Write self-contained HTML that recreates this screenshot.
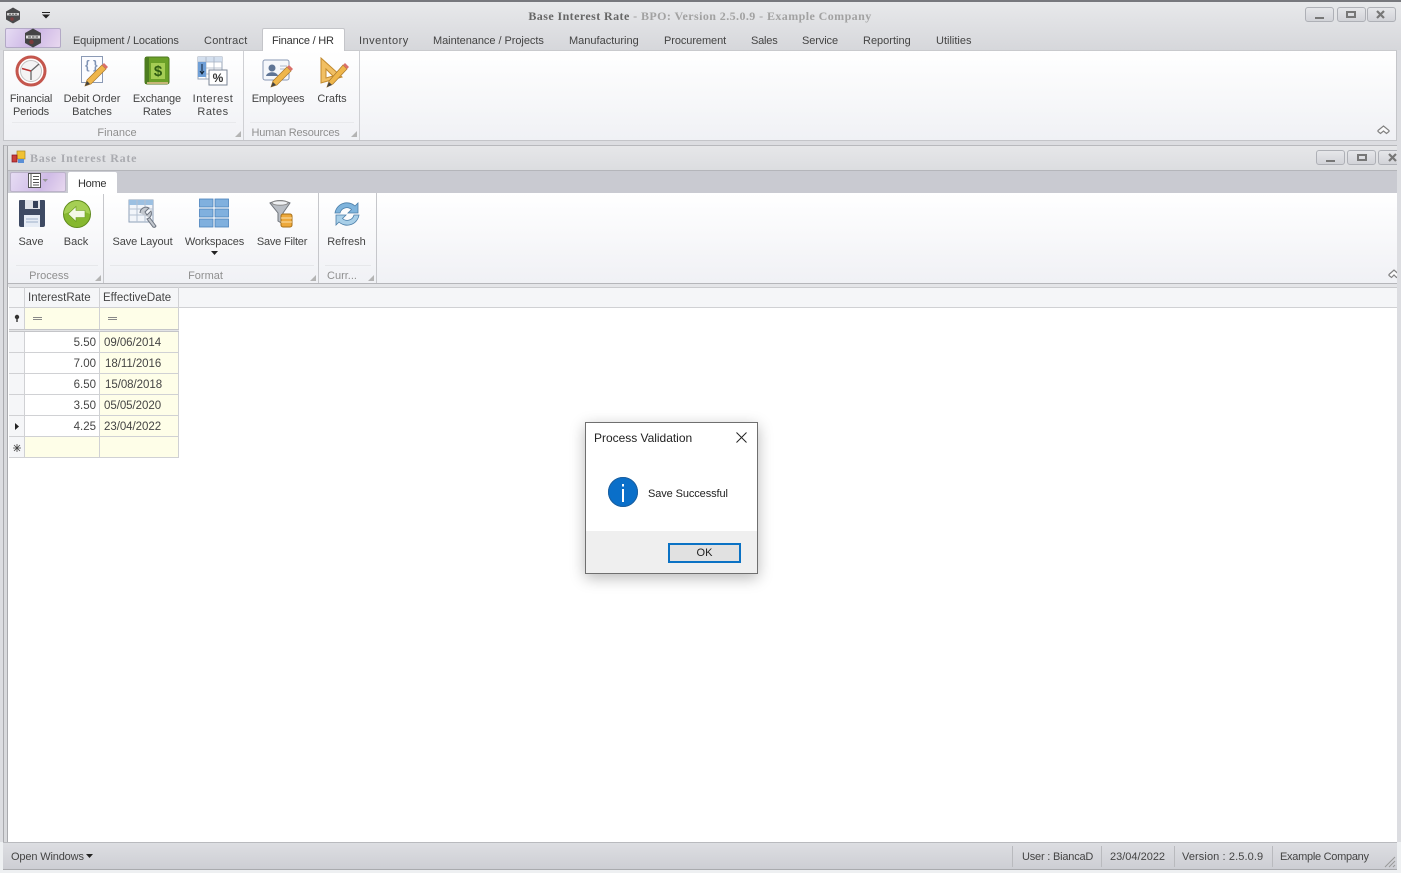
<!DOCTYPE html>
<html><head><meta charset="utf-8"><title>Base Interest Rate</title>
<style>
html,body{margin:0;padding:0}
body{width:1401px;height:873px;overflow:hidden;position:relative;background:#dcdde1;font-family:"Liberation Sans",sans-serif;font-size:11px;color:#333}
.a{position:absolute}
.t{position:absolute;white-space:nowrap;line-height:13px;color:#444;margin-top:1px}
.c{transform:translateX(-50%);text-align:center}
.g{color:#8f8f8f}
.wb{position:absolute;height:13px;border:1px solid #aeb0b6;border-radius:3px;background:linear-gradient(#e6e7ea,#d2d3d8);box-sizing:content-box}
.corner{position:absolute;width:0;height:0;border-left:6px solid transparent;border-bottom:6px solid #b4b4b4}
svg{position:absolute;overflow:visible}
.cell{position:absolute;box-sizing:border-box;border-right:1px solid #d0d1d4;border-bottom:1px solid #d0d1d4;line-height:22px;color:#444;font-size:11.5px;height:21px}
</style></head><body>

<!-- top chrome -->
<div class="a" style="left:0;top:0;width:1401px;height:2px;background:#77787d"></div>
<div class="a" style="left:0;top:2px;width:1401px;height:48px;background:linear-gradient(#e8e9eb,#d6d7db)"></div>
<svg style="left:5px;top:7px" width="16" height="17" viewBox="0 0 16 17"><path d="M8 0.5L15 4.500V12.500L8 16.500L1 12.500V4.500Z" fill="#4a4a4c"/><rect x="2" y="6" width="12" height="2.500" fill="#cfcfcf"/><path d="M4 7.200H6M7 7.200H9M10 7.200H12" stroke="#444" stroke-width=".8"/><circle cx="7" cy="12" r="1.800" fill="#7c3f3f"/></svg>
<svg style="left:42px;top:12px" width="8" height="7"><rect x="0" y="0" width="8" height="1" fill="#222"/><path d="M0 2.500H8L4 6.500Z" fill="#222"/></svg>
<div class="t c" style="left:700px;top:9px;font-family:'Liberation Serif',serif;font-size:12px;font-weight:bold;color:#a2a2a2;letter-spacing:.42px"><span style="color:#666">Base Interest Rate</span> - BPO: Version 2.5.0.9 - Example Company</div>

<div class="wb" style="left:1305px;top:7px;width:27px"></div>
<div class="a" style="left:1315px;top:17px;width:9px;height:2px;background:#777"></div>
<div class="wb" style="left:1337px;top:7px;width:27px"></div>
<div class="a" style="left:1346px;top:11px;width:6px;height:3px;border:2px solid #777"></div>
<div class="wb" style="left:1367px;top:7px;width:27px"></div>
<svg style="left:1376px;top:10px" width="10" height="9"><path d="M1 1L8 8M8 1L1 8" stroke="#777" stroke-width="2.200"/></svg>

<!-- app button -->
<div class="a" style="left:5px;top:28px;width:54px;height:18px;border:1px solid #b3a9c6;border-radius:2px;background:linear-gradient(120deg,#e6dcf3,#cdb7e6 50%,#e8d8ef)"></div>
<svg style="left:24px;top:28px" width="18" height="20" viewBox="0 0 18 20"><path d="M9 0.500L17 5V15L9 19.500L1 15V5Z" fill="#444446"/><rect x="2" y="7.500" width="14" height="3" fill="#dedede"/><path d="M4 9H7M8 9H10.500M11.500 9H14" stroke="#444" stroke-width=".9"/><circle cx="7.500" cy="14" r="2.200" fill="#7c3a3a"/></svg>

<!-- main tabs -->
<div class="t" style="left:73px;top:34px;letter-spacing:-.15px">Equipment / Locations</div>
<div class="t" style="left:204px;top:34px;letter-spacing:.25px">Contract</div>
<div class="a" style="left:262px;top:28px;width:83px;height:23px;background:#fff;border:1px solid #c4c5c9;border-bottom:none;box-sizing:border-box;border-radius:2px 2px 0 0;z-index:3"></div>
<div class="t" style="left:272px;top:34px;z-index:4;color:#333;letter-spacing:-.2px">Finance / HR</div>
<div class="t" style="left:359px;top:34px;letter-spacing:.5px">Inventory</div>
<div class="t" style="left:433px;top:34px;letter-spacing:-.05px">Maintenance / Projects</div>
<div class="t" style="left:569px;top:34px">Manufacturing</div>
<div class="t" style="left:664px;top:34px;letter-spacing:-.08px">Procurement</div>
<div class="t" style="left:751px;top:34px;letter-spacing:-.2px">Sales</div>
<div class="t" style="left:802px;top:34px;letter-spacing:-.1px">Service</div>
<div class="t" style="left:863px;top:34px">Reporting</div>
<div class="t" style="left:936px;top:34px">Utilities</div>

<!-- main ribbon -->
<div class="a" style="left:3px;top:50px;width:1394px;height:91px;box-sizing:border-box;background:linear-gradient(#fff,#f0f1f5);border:1px solid #c4c5c9;border-top:1px solid #c9cacd"></div>
<div class="a" style="left:243px;top:51px;width:1px;height:89px;background:#cfd0d4"></div>
<div class="a" style="left:359px;top:51px;width:1px;height:89px;background:#cfd0d4"></div>
<div class="a" style="left:12px;top:122px;width:224px;height:1px;background:#e8e9ec"></div>
<div class="a" style="left:250px;top:122px;width:104px;height:1px;background:#e8e9ec"></div>
<div class="corner" style="left:235px;top:131px"></div>
<div class="corner" style="left:351px;top:131px"></div>

<!-- clock -->
<svg style="left:15px;top:55px" width="32" height="32" viewBox="0 0 32 32"><circle cx="16" cy="16" r="14" fill="#fff" stroke="#c4564d" stroke-width="3"/><circle cx="16" cy="16" r="10.500" fill="#f4f4f4" stroke="#c2c2c2"/><path d="M16 16L16 25M16 16L24 9" stroke="#666" stroke-width="1.300" fill="none"/><path d="M16 16L7 13.500" stroke="#b33" stroke-width="1.500"/></svg>
<!-- debit order -->
<svg style="left:79px;top:55px" width="30" height="32" viewBox="0 0 30 32"><rect x="2.500" y="1.500" width="21" height="26" fill="#fbfcff" stroke="#8b9ab5"/><text x="6" y="14" font-family="Liberation Sans" font-size="12" font-weight="bold" fill="#7f93b5">{ }</text><path d="M6 31L8 25L23 10L27 14L12 29Z" fill="#efb64b" stroke="#a9772a" stroke-width=".7"/><path d="M23 10L25 8L29 12L27 14Z" fill="#d9706a"/><path d="M6 31L8 26L11 29Z" fill="#444"/></svg>
<!-- exchange -->
<svg style="left:144px;top:56px" width="26" height="30" viewBox="0 0 26 30"><rect x="1" y="1" width="24" height="27" rx="2" fill="#6ba028" stroke="#4d7820"/><rect x="1" y="1" width="4" height="27" fill="#4d7d1f"/><rect x="7" y="7" width="14" height="16" fill="#a5cd54"/><text x="14" y="20" text-anchor="middle" font-size="15" font-weight="bold" fill="#2f5c12">$</text><rect x="3" y="26" width="21" height="2" fill="#c7b678"/></svg>
<!-- interest -->
<svg style="left:197px;top:56px" width="32" height="31" viewBox="0 0 32 31"><rect x="1" y="1" width="24" height="22" fill="#fff" stroke="#9aa6b8"/><rect x="1" y="1" width="24" height="5" fill="#d3dfee"/><path d="M9 1V23M17 1V23M1 6H25M1 12H25M1 18H25" stroke="#a6b1c2" stroke-width=".8"/><rect x="1" y="6" width="8" height="15" fill="#6f9fd7"/><path d="M5 8V17M3 15L5 18L7 15" stroke="#123" stroke-width="1" fill="none"/><rect x="12" y="14" width="18" height="15" fill="#fff" stroke="#7b8697"/><text x="21" y="26" text-anchor="middle" font-size="12" font-weight="bold" fill="#333">%</text></svg>
<!-- employees -->
<svg style="left:262px;top:57px" width="32" height="31" viewBox="0 0 32 31"><rect x="1" y="3" width="26" height="20" rx="2" fill="#f5f7fb" stroke="#8998b4"/><circle cx="10" cy="11" r="3.500" fill="#5f7596"/><path d="M4 19C5 14 15 14 16 19Z" fill="#5f7596"/><path d="M18 9H25M18 12H24" stroke="#aeb8c8"/><path d="M9 30L11 24L25 10L29 14L15 28Z" fill="#efb64b" stroke="#a9772a" stroke-width=".7"/><path d="M25 10L27 8L31 12L29 14Z" fill="#d9706a"/><path d="M9 30L11 25L14 28Z" fill="#444"/></svg>
<!-- crafts -->
<svg style="left:320px;top:57px" width="30" height="31" viewBox="0 0 30 31"><path d="M1 1L22 20L1 26Z" fill="#f1bf63" stroke="#c28a2e"/><path d="M6 12L13 19L6 21Z" fill="#fff" stroke="#c28a2e"/><path d="M7 30L9 24L23 8L27 12L13 27Z" fill="#efb64b" stroke="#a9772a" stroke-width=".7"/><path d="M23 8L25 6L29 10L27 12Z" fill="#d9706a"/><path d="M7 30L9 25L12 28Z" fill="#444"/></svg>

<div class="t c" style="left:31px;top:92px;letter-spacing:-.2px">Financial<br>Periods</div>
<div class="t c" style="left:92px;top:92px">Debit Order<br>Batches</div>
<div class="t c" style="left:157px;top:92px;letter-spacing:-.1px">Exchange<br>Rates</div>
<div class="t c" style="left:213px;top:92px;letter-spacing:.5px">Interest<br>Rates</div>
<div class="t c" style="left:278px;top:92px;letter-spacing:-.2px">Employees</div>
<div class="t c" style="left:332px;top:92px">Crafts</div>
<div class="t c g" style="left:117px;top:126px">Finance</div>
<div class="t c g" style="left:295.500px;top:126px;letter-spacing:-.2px">Human Resources</div>
<svg style="left:1377px;top:125px" width="13" height="10"><path d="M1 5.500L6.500 1L12 5.500V6.500L9.500 8.500L6.500 6L3.500 8.500L1 6.500Z" stroke="#808080" stroke-width="1.200" fill="#fbfbfc"/></svg>

<!-- MDI child -->
<div class="a" style="left:3px;top:145px;width:1394px;height:1px;background:#b8b9bd"></div>
<div class="a" style="left:3px;top:145px;width:1px;height:697px;background:#a9aaae"></div>
<div class="a" style="left:7px;top:146px;width:1px;height:696px;background:#a9aaae"></div>
<div class="a" style="left:4px;top:146px;width:3px;height:696px;background:#d9dadd"></div>
<div class="a" style="left:8px;top:146px;width:1389px;height:24px;background:linear-gradient(#e6e7e9,#dcdde0)"></div>
<svg style="left:12px;top:151px" width="13" height="13"><rect x="5" y="0" width="8" height="8" fill="#f1c232" stroke="#a8861e" stroke-width=".7"/><rect x="0" y="4" width="5" height="7" fill="#c9403a" stroke="#812" stroke-width=".7"/><rect x="6" y="8" width="6" height="4" fill="#5b8fd6"/></svg>
<div class="t" style="left:30px;top:151px;font-family:'Liberation Serif',serif;font-size:12px;font-weight:bold;color:#aaabb0;letter-spacing:.75px">Base Interest Rate</div>
<div class="wb" style="left:1316px;top:150px;width:27px"></div>
<div class="a" style="left:1326px;top:160px;width:9px;height:2px;background:#777"></div>
<div class="wb" style="left:1347px;top:150px;width:27px"></div>
<div class="a" style="left:1357px;top:154px;width:6px;height:3px;border:2px solid #777"></div>
<div class="wb" style="left:1378px;top:150px;width:18px;border-right:none;border-radius:3px 0 0 3px"></div>
<svg style="left:1388px;top:153px" width="9" height="9"><path d="M1 1L8 8M8 1L1 8" stroke="#777" stroke-width="2.200"/></svg>

<div class="a" style="left:8px;top:170px;width:1389px;height:23px;background:#c9cad1;border-top:1px solid #b4b5ba;box-sizing:border-box"></div>
<div class="a" style="left:10px;top:172px;width:54px;height:18px;border:1px solid #bcb3ca;border-radius:2px;background:linear-gradient(120deg,#e6dcf3,#cfbbe6 60%,#e8d8ef)"></div>
<svg style="left:28px;top:173px" width="22" height="16"><rect x=".5" y=".5" width="12" height="14" fill="#fff" stroke="#555"/><path d="M3 .5V14.500M5 3.500H11M5 6.500H11M5 9.500H11M5 12H11" stroke="#555"/><path d="M14.500 6H20L17.250 9Z" fill="#999"/></svg>
<div class="a" style="left:68px;top:172px;width:49px;height:22px;background:#fff;z-index:3;border-radius:2px 2px 0 0"></div>
<div class="t" style="left:78px;top:177px;z-index:4;color:#333;letter-spacing:-.3px">Home</div>

<!-- child ribbon -->
<div class="a" style="left:8px;top:193px;width:1389px;height:91px;background:linear-gradient(#fff,#f0f1f5);border-bottom:1px solid #b5b6ba;box-sizing:border-box"></div>
<div class="a" style="left:103px;top:193px;width:1px;height:90px;background:#c6c7cb"></div>
<div class="a" style="left:318px;top:193px;width:1px;height:90px;background:#c6c7cb"></div>
<div class="a" style="left:376px;top:193px;width:1px;height:90px;background:#c6c7cb"></div>
<div class="a" style="left:16px;top:265px;width:82px;height:1px;background:#e6e7ea"></div>
<div class="a" style="left:110px;top:265px;width:204px;height:1px;background:#e6e7ea"></div>
<div class="a" style="left:325px;top:265px;width:46px;height:1px;background:#e6e7ea"></div>
<div class="corner" style="left:95px;top:275px"></div>
<div class="corner" style="left:310px;top:275px"></div>
<div class="corner" style="left:368px;top:275px"></div>

<!-- save -->
<svg style="left:18px;top:199px" width="28" height="29" viewBox="0 0 28 29"><path d="M1 2Q1 1 2 1H26Q27 1 27 2V26Q27 28 25 28H3Q1 28 1 26Z" fill="#3e4a63"/><rect x="7" y="1" width="15" height="9" fill="#dfe3ea"/><rect x="15" y="2" width="5" height="7" fill="#33405a"/><rect x="6" y="16" width="16" height="12" fill="#e6ecf5"/><path d="M8 20H20M8 23H20" stroke="#9fb0c9"/></svg>
<!-- back -->
<svg style="left:63px;top:200px" width="28" height="28" viewBox="0 0 28 28"><circle cx="14" cy="14" r="13.500" fill="#86b82f" stroke="#5f8a1c"/><path d="M1 14A13 13 0 0 1 27 14Q14 8 1 14Z" fill="#a5cf54"/><path d="M5 14L13 6.500V10.500H22V17.500H13V21.500Z" fill="#f3f8e6" stroke="#6a9a20" stroke-width=".6"/></svg>
<!-- save layout -->
<svg style="left:128px;top:199px" width="32" height="31" viewBox="0 0 32 31"><rect x="1" y="1" width="24" height="22" fill="#f2f5fa" stroke="#8fa1b8"/><rect x="1" y="1" width="24" height="5" fill="#9cc0e2"/><path d="M9 1V23M17 1V23M1 10H25M1 16H25" stroke="#b4c1d2"/><path d="M12 14A6 6 0 0 1 21 9L17 13L19 16L23 12A6 6 0 0 1 19 20L25 28Q27 29 28 27L22 19" fill="#c3c8cf" stroke="#6d7480"/></svg>
<!-- workspaces -->
<svg style="left:199px;top:198px" width="31" height="31" viewBox="0 0 31 31"><g fill="#80b0de" stroke="#4a82bc" stroke-width=".8"><rect x=".5" y="1" width="13.500" height="8"/><rect x="16" y="1" width="13.500" height="8"/><rect x=".5" y="11" width="13.500" height="8"/><rect x="16" y="11" width="13.500" height="8"/><rect x=".5" y="21" width="13.500" height="8"/><rect x="16" y="21" width="13.500" height="8"/></g></svg>
<!-- save filter -->
<svg style="left:269px;top:199px" width="28" height="30" viewBox="0 0 28 30"><path d="M1 4Q11 -1 21 4L14 14V25L9 22V14Z" fill="#b9bec5" stroke="#6f747b"/><ellipse cx="11" cy="4" rx="8" ry="2.200" fill="#eef0f3" stroke="#888"/><rect x="12" y="15" width="11" height="13" rx="2" fill="#eda83a" stroke="#a76f18"/><path d="M12 19H23M12 23H23" stroke="#fbe1ab"/></svg>
<!-- refresh -->
<svg style="left:331px;top:200px" width="32" height="28" viewBox="0 0 32 28"><path d="M4 13A12 12 0 0 1 24 6L27 3V13H17L20.500 9.500A7 7 0 0 0 9 13Z" fill="#7fb4dc" stroke="#4b7ea8" stroke-width=".8"/><path d="M28 15A12 12 0 0 1 8 22L5 25V15H15L11.500 18.500A7 7 0 0 0 23 15Z" fill="#a8cfe8" stroke="#4b7ea8" stroke-width=".8"/></svg>
<svg style="left:211px;top:251px" width="7" height="4"><path d="M0 0H7L3.500 4Z" fill="#222"/></svg>

<div class="t c" style="left:31px;top:235px">Save</div>
<div class="t c" style="left:76px;top:235px">Back</div>
<div class="t c" style="left:142.500px;top:235px;letter-spacing:-.1px">Save Layout</div>
<div class="t c" style="left:214.500px;top:235px;letter-spacing:-.1px">Workspaces</div>
<div class="t c" style="left:282px;top:235px;letter-spacing:-.2px">Save Filter</div>
<div class="t c" style="left:346.500px;top:235px">Refresh</div>
<div class="t c g" style="left:49px;top:269px">Process</div>
<div class="t c g" style="left:205.500px;top:269px">Format</div>
<div class="t c g" style="left:342px;top:269px">Curr...</div>
<svg style="left:1388px;top:269px;clip-path:inset(0 2px 0 0)" width="11" height="10"><path d="M1 5.500L6 1L11 5.500V6.500L8.500 8.500L6 6L3.500 8.500L1 6.500Z" stroke="#808080" stroke-width="1.200" fill="#fbfbfc"/></svg>

<!-- grid area -->
<div class="a" style="left:8px;top:284px;width:1389px;height:558px;background:#fff"></div>
<div class="a" style="left:8px;top:284px;width:1389px;height:3px;background:#e4e5e8"></div>
<div class="a" style="left:9px;top:287px;width:1388px;height:21px;background:#f5f6f8;border-top:1px solid #c9cacd;border-bottom:1px solid #d0d1d4;box-sizing:border-box"></div>
<div class="a" style="left:24px;top:287px;width:1px;height:21px;background:#d0d1d4"></div>
<div class="a" style="left:99px;top:287px;width:1px;height:21px;background:#d0d1d4"></div>
<div class="a" style="left:178px;top:287px;width:1px;height:21px;background:#d0d1d4"></div>
<div class="t" style="left:28px;top:291px;font-size:11.500px">InterestRate</div>
<div class="t" style="left:103px;top:291px;font-size:11.500px">EffectiveDate</div>

<!-- filter row -->
<div class="a" style="left:9px;top:308px;width:16px;height:21px;background:#f5f6f8;border-right:1px solid #d0d1d4;box-sizing:border-box"></div>
<div class="a" style="left:25px;top:308px;width:154px;height:21px;background:#fefee8"></div>
<div class="a" style="left:99px;top:308px;width:1px;height:21px;background:#d0d1d4"></div>
<div class="a" style="left:178px;top:308px;width:1px;height:21px;background:#d0d1d4"></div>
<svg style="left:14px;top:315px" width="6" height="8"><circle cx="3" cy="2" r="2.200" fill="#333"/><rect x="2.300" y="2" width="1.400" height="5" fill="#333"/></svg>
<div class="a" style="left:33px;top:317px;width:9px;height:3px;border-top:1px solid #888;border-bottom:1px solid #888;box-sizing:border-box"></div>
<div class="a" style="left:108px;top:317px;width:9px;height:3px;border-top:1px solid #888;border-bottom:1px solid #888;box-sizing:border-box"></div>
<div class="a" style="left:9px;top:329px;width:170px;height:3px;background:#e3e4e6;border-top:1px solid #c4c5c8;border-bottom:1px solid #c4c5c8;box-sizing:border-box"></div>

<!-- rows -->
<div class="cell" style="left:9px;top:332px;width:16px;background:#f5f6f8"></div><div class="cell" style="left:25px;top:332px;width:75px;text-align:right;padding-right:3px">5.50</div><div class="cell" style="left:100px;top:332px;width:79px;background:#fefee8;padding-left:4px;letter-spacing:-.05px">09/06/2014</div>
<div class="cell" style="left:9px;top:353px;width:16px;background:#f5f6f8"></div><div class="cell" style="left:25px;top:353px;width:75px;text-align:right;padding-right:3px">7.00</div><div class="cell" style="left:100px;top:353px;width:79px;background:#fefee8;padding-left:5px;letter-spacing:-.05px">18/11/2016</div>
<div class="cell" style="left:9px;top:374px;width:16px;background:#f5f6f8"></div><div class="cell" style="left:25px;top:374px;width:75px;text-align:right;padding-right:3px">6.50</div><div class="cell" style="left:100px;top:374px;width:79px;background:#fefee8;padding-left:5px;letter-spacing:-.05px">15/08/2018</div>
<div class="cell" style="left:9px;top:395px;width:16px;background:#f5f6f8"></div><div class="cell" style="left:25px;top:395px;width:75px;text-align:right;padding-right:3px">3.50</div><div class="cell" style="left:100px;top:395px;width:79px;background:#fefee8;padding-left:4px;letter-spacing:-.05px">05/05/2020</div>
<div class="cell" style="left:9px;top:416px;width:16px;background:#f5f6f8"></div><div class="cell" style="left:25px;top:416px;width:75px;text-align:right;padding-right:3px">4.25</div><div class="cell" style="left:100px;top:416px;width:79px;background:#fefee8;padding-left:4px;letter-spacing:-.05px">23/04/2022</div>
<div class="cell" style="left:9px;top:437px;width:16px;background:#f5f6f8"></div><div class="cell" style="left:25px;top:437px;width:75px;background:#fefee8"></div><div class="cell" style="left:100px;top:437px;width:79px;background:#fefee8"></div>
<svg style="left:15px;top:423px" width="5" height="7"><path d="M0 0L4 3.500L0 7Z" fill="#222"/></svg>
<svg style="left:13px;top:444px" width="8" height="8"><path d="M4 0V8M0 4H8M1 1L7 7M7 1L1 7" stroke="#444" stroke-width=".8"/></svg>

<!-- dialog -->
<div class="a" style="left:585px;top:422px;width:173px;height:152px;box-sizing:border-box;background:#fff;border:1px solid #6f6f6f;box-shadow:0 4px 14px rgba(0,0,0,.28);z-index:10">
  <div class="t" style="left:8px;top:8px;font-size:12px;color:#222;letter-spacing:-.02px">Process Validation</div>
  <svg style="left:150px;top:9px" width="11" height="11"><path d="M.5 .5L10.500 10.500M10.500 .5L.5 10.500" stroke="#222" stroke-width="1"/></svg>
  <svg style="left:22px;top:54px" width="30" height="30"><circle cx="15" cy="15" r="15" fill="#0a6fc9"/><circle cx="15" cy="15" r="14.500" fill="none" stroke="#1c5f9e"/><rect x="14" y="12" width="2" height="13" fill="#fff"/><rect x="14" y="7" width="2" height="2.500" fill="#fff"/></svg>
  <div class="t" style="left:62px;top:64px;font-size:11px;color:#222;letter-spacing:-.1px">Save Successful</div>
  <div class="a" style="left:0;top:108px;width:171px;height:42px;background:#efefef"></div>
  <div class="a" style="left:82px;top:120px;width:73px;height:20px;box-sizing:border-box;background:#e1e1e1;border:2px solid #0b72c4;text-align:center;line-height:17px;color:#222;font-size:11px">OK</div>
</div>

<!-- status bar -->
<div class="a" style="left:0;top:842px;width:1401px;height:31px;background:#eef0f2"></div>
<div class="a" style="left:3px;top:842px;width:1394px;height:28px;background:linear-gradient(#dddee2,#cdced4);border-top:1px solid #b9babe;border-bottom:1px solid #a9aaae;box-sizing:border-box"></div>
<div class="t" style="left:11px;top:850px;letter-spacing:-.15px">Open Windows</div>
<svg style="left:86px;top:854px" width="7" height="4"><path d="M0 0H7L3.500 4Z" fill="#222"/></svg>
<div class="a" style="left:1012px;top:846px;width:1px;height:21px;background:#b9babe"></div>
<div class="a" style="left:1101px;top:846px;width:1px;height:21px;background:#b9babe"></div>
<div class="a" style="left:1174px;top:846px;width:1px;height:21px;background:#b9babe"></div>
<div class="a" style="left:1272px;top:846px;width:1px;height:21px;background:#b9babe"></div>
<div class="t" style="left:1022px;top:850px;letter-spacing:-.2px">User : BiancaD</div>
<div class="t" style="left:1110px;top:850px">23/04/2022</div>
<div class="t" style="left:1182px;top:850px;letter-spacing:.1px">Version : 2.5.0.9</div>
<div class="t" style="left:1280px;top:850px;letter-spacing:-.28px">Example Company</div>
<svg style="left:1384px;top:856px" width="12" height="12"><path d="M11 1L1 11M11 5L5 11M11 9L9 11" stroke="#999"/></svg>
</body></html>
